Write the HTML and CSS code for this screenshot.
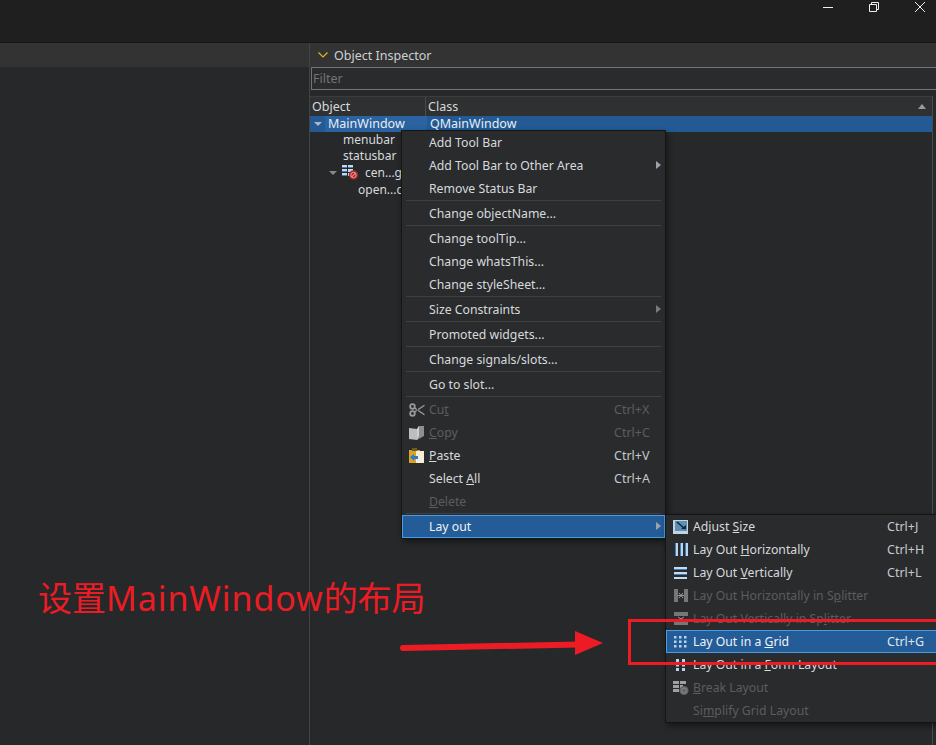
FILE: index.html
```html
<!DOCTYPE html>
<html lang="zh-CN">
<head>
    <meta charset="UTF-8">
    <title>Object Inspector</title>
    <link rel="stylesheet" href="styles.css">
</head>
<body>

<div class="titlebar">
    <svg class="winbtn" width="12" height="12" viewBox="0 0 12 12"><path d="M1 6.5h10" stroke="#eee" fill="none"/></svg>
    <svg class="winbtn" width="12" height="12" viewBox="0 0 12 12"><path d="M1.5 3.5h7v7h-7zM3.5 3V1.5h7v7H9" stroke="#eee" fill="none"/></svg>
    <svg class="winbtn" width="12" height="12" viewBox="0 0 12 12"><path d="M1 1l10 10M11 1L1 11" stroke="#eee" fill="none"/></svg>
</div>

<div class="workspace">
    <div class="leftpane">
        <div class="band"></div>
    </div>
    <div class="inspector">
        <div class="band dock-title">
            <svg width="10" height="6" viewBox="0 0 10 6"><path d="M.5.5L5 5 9.5.5" stroke="#e6b422" stroke-width="1.2" fill="none"/></svg>
            <span>Object Inspector</span>
        </div>
        <div class="filter">Filter</div>
        <div class="tree">
            <div class="tree-main">
                <div class="tree-head">
                    <div class="col-object">Object</div>
                    <div class="col-class">Class<span class="sort"></span></div>
                </div>
                <div class="row row-selected">
                    <span class="twisty"></span><span class="row-name">MainWindow</span><span class="row-class">QMainWindow</span>
                </div>
                <div class="row indent-2">menubar</div>
                <div class="row indent-2">statusbar</div>
                <div class="row row-tall indent-1">
                    <span class="twisty"></span>
                    <svg width="17" height="15" viewBox="0 0 17 15">
                        <path d="M0 0h5v3H0zM6 0h5v3H6zM0 4h5v3H0zM6 4h5v3H6zM0 8h5v3H0zM6 8h2v3H6z" fill="#c9d6e6"/>
                        <path d="M0 2h5v1H0zM6 2h5v1H6zM0 6h5v1H0zM0 10h5v1H0z" fill="#3f7db8"/>
                        <circle cx="11.500" cy="10" r="4.700" fill="#a82828"/>
                        <circle cx="11.500" cy="10" r="2.700" stroke="#e8a0a0" fill="none"/>
                        <path d="M9.500 12l4-4" stroke="#f3c0c0"/>
                    </svg>
                    <span class="row-label">cen...g</span>
                </div>
                <div class="row row-tall indent-3">open...c</div>
            </div>
            <div class="scrollcol"></div>
        </div>
    </div>
</div>

<div class="menu menu-main">
    <div class="item"><span></span><span>Add Tool Bar</span></div>
    <div class="item"><span></span><span>Add Tool Bar to Other Area</span><i class="more"></i></div>
    <div class="item"><span></span><span>Remove Status Bar</span></div>
    <div class="sep"></div>
    <div class="item"><span></span><span>Change objectName...</span></div>
    <div class="sep"></div>
    <div class="item"><span></span><span>Change toolTip...</span></div>
    <div class="item"><span></span><span>Change whatsThis...</span></div>
    <div class="item"><span></span><span>Change styleSheet...</span></div>
    <div class="sep"></div>
    <div class="item"><span></span><span>Size Constraints</span><i class="more more-dim"></i></div>
    <div class="sep"></div>
    <div class="item"><span></span><span>Promoted widgets...</span></div>
    <div class="sep"></div>
    <div class="item"><span></span><span>Change signals/slots...</span></div>
    <div class="sep"></div>
    <div class="item"><span></span><span>Go to slot...</span></div>
    <div class="sep"></div>
    <div class="item off">
        <svg width="16" height="16" viewBox="0 0 16 16"><path d="M15.500 2.500L5 9.500 6 10.500 15.500 4zM15.500 13.500L5 6.500 6 5.500 15.500 12z" fill="#9a9a9a"/><circle cx="3.500" cy="4.500" r="2.300" stroke="#9a9a9a" stroke-width="1.800" fill="none"/><circle cx="3.500" cy="11.500" r="2.300" stroke="#9a9a9a" stroke-width="1.800" fill="none"/></svg>
        <span>Cu<u>t</u></span><b>Ctrl+X</b>
    </div>
    <div class="item off">
        <svg width="16" height="16" viewBox="0 0 16 16"><path d="M0 3l8 1v11l-8-1z" fill="#bdbdbd"/><path d="M8 4l2-3h5v10l-7 4z" fill="#8f8f8f"/><path d="M8 4l2-3v10l-2 4z" fill="#d0d0d0"/></svg>
        <span><u>C</u>opy</span><b>Ctrl+C</b>
    </div>
    <div class="item">
        <svg width="16" height="16" viewBox="0 0 16 16"><path d="M0 2h11v13H0z" fill="#d9a520"/><path d="M3 0h5v3H3z" fill="#6a5a28"/><path d="M7 3h8v12H7z" fill="#f4eed8"/><path d="M1 9l4-3v2h4v3H5v2z" fill="#2f78d0"/></svg>
        <span><u>P</u>aste</span><b>Ctrl+V</b>
    </div>
    <div class="item"><span></span><span>Select <u>A</u>ll</span><b>Ctrl+A</b></div>
    <div class="item off"><span></span><span><u>D</u>elete</span></div>
    <div class="sep"></div>
    <div class="item item-active"><span></span><span>Lay out</span><i class="more"></i></div>
</div>

<div class="menu menu-sub">
    <div class="item">
        <svg width="15" height="14" viewBox="0 0 15 14"><path d="M0 0h15v14H0z" fill="#c7d3dc"/><path d="M2 1h12v10H2z" fill="#5b8fb5"/><path d="M4 2l8 7" stroke="#10273d" stroke-width="1.600"/><path d="M8 9h5V5z" fill="#10273d"/></svg>
        <span>Adjust <u>S</u>ize</span><b>Ctrl+J</b>
    </div>
    <div class="item">
        <svg width="14" height="13" viewBox="0 0 14 13"><path d="M1 0h3v13H1zM6 0h3v13H6zM11 0h3v13h-3z" fill="#b9d4ec"/><path d="M1 0h1v13H1zM6 0h1v13H6zM11 0h1v13h-1z" fill="#3f7db8"/></svg>
        <span>Lay Out <u>H</u>orizontally</span><b>Ctrl+H</b>
    </div>
    <div class="item">
        <svg width="14" height="13" viewBox="0 0 14 13"><path d="M0 1h13v3H0zM0 6h13v3H0zM0 11h13v2H0z" fill="#c5dcf0"/><path d="M0 3h13v1H0zM0 8h13v1H0z" fill="#3f7db8"/></svg>
        <span>Lay Out <u>V</u>ertically</span><b>Ctrl+L</b>
    </div>
    <div class="item off">
        <svg width="14" height="13" viewBox="0 0 14 13"><path d="M0 0h4v13H0zM10 0h4v13h-4z" fill="#777"/><path d="M4 6.500h6M5 4l2 2.500L5 9M9 4L7 6.500 9 9" stroke="#999" fill="none"/></svg>
        <span>Lay Out Horizontally in S<u>p</u>litter</span>
    </div>
    <div class="item off">
        <svg width="14" height="13" viewBox="0 0 14 13"><path d="M0 0h14v4H0zM0 9h14v4H0z" fill="#777"/><path d="M4 5l3 2 3-2M4 8l3-1.500 3 1.500" stroke="#999" fill="none"/></svg>
        <span>Lay Out Vertically in Sp<u>l</u>itter</span>
    </div>
    <div class="item item-active">
        <svg width="13" height="13" viewBox="0 0 13 13"><path d="M0 1h2.500v2.500H0zM5 1h2.500v2.500H5zM10 1h2.500v2.500H10zM0 5.500h2.500V8H0zM5 5.500h2.500V8H5zM10 5.500h2.500V8H10zM0 10h2.500v2.500H0zM5 10h2.500v2.500H5zM10 10h2.500v2.500H10z" fill="#b9d4ec"/></svg>
        <span>Lay Out in a <u>G</u>rid</span><b>Ctrl+G</b>
    </div>
    <div class="item">
        <svg width="13" height="13" viewBox="0 0 13 13"><path d="M2 1h3v3H2zM8 1h3v3H8zM2 5.500h3v3H2zM8 5.500h3v3H8zM2 10h3v3H2zM8 10h3v3H8z" fill="#b9d4ec"/></svg>
        <span>Lay Out in a <u>F</u>orm Layout</span>
    </div>
    <div class="item off">
        <svg width="16" height="15" viewBox="0 0 16 15"><path d="M0 1h6v3H0zM7 1h6v3H7zM0 5h6v3H0zM0 9h6v3H0zM7 5h3v3H7z" fill="#a0a0a0"/><circle cx="11" cy="10.500" r="4.500" fill="#666"/><circle cx="11" cy="10.500" r="2.500" stroke="#888" fill="none"/></svg>
        <span><u>B</u>reak Layout</span>
    </div>
    <div class="item off"><span></span><span>Si<u>m</u>plify Grid Layout</span></div>
</div>

<div class="note">设置<span class="note-latin">MainWindow</span>的布局</div>
<div class="red-box"></div>
<svg class="red-arrow" width="210" height="30" viewBox="0 0 210 30">
    <path d="M4 19L180 15.500" stroke="#ed1c24" stroke-width="6" stroke-linecap="round" fill="none"/>
    <path d="M176 2L204 14 176 26z" fill="#ed1c24"/>
</svg>

</body>
</html>
```

FILE: styles.css
```css
html, body {
    margin: 0;
    height: 100%;
    overflow: hidden;
}
body {
    width: 936px;
    height: 745px;
    position: relative;
    display: flex;
    flex-direction: column;
    background-color: #26282a;
    color: #d6dadd;
    font-family: "Noto Sans", "Liberation Sans", sans-serif;
    font-size: 12.5px;
}
.titlebar {
    height: 43px;
    flex: none;
    box-sizing: border-box;
    background-color: #1f1f1f;
    border-bottom: 1px solid #161616;
    display: flex;
    justify-content: flex-end;
    align-items: flex-start;
    gap: 34px;
    padding: 1px 10px 0 0;
}
.workspace {
    flex: 1;
    display: flex;
    min-height: 0;
}
.leftpane {
    width: 309px;
    flex: none;
    border-right: 1px solid #444;
}
.band {
    height: 24px;
    background-color: #333;
}
.inspector {
    flex: 1;
    display: flex;
    flex-direction: column;
    min-width: 0;
}
.dock-title {
    display: flex;
    align-items: center;
    gap: 6px;
    padding-left: 8px;
    color: #ccd0d4;
    height: 24px;
}
.filter {
    height: 23px;
    box-sizing: border-box;
    border: 1px solid #747474;
    border-right: none;
    margin-left: 1px;
    padding-left: 1px;
    line-height: 21px;
    color: #757575;
    background-color: #2a2b2d;
}
.tree {
    flex: 1;
    display: flex;
    margin-top: 6px;
}
.tree-main {
    flex: 1;
}
.scrollcol {
    width: 3px;
    border-left: 1px solid #4c4c4c;
}
.tree-head {
    height: 20px;
    display: flex;
    background-color: #2f3031;
    border-top: 1px solid #3c3c3c;
    box-sizing: border-box;
    line-height: 19px;
}
.col-object {
    width: 116px;
    padding-left: 2px;
    border-right: 1px solid #4a4a4a;
    box-sizing: border-box;
}
.col-class {
    flex: 1;
    padding-left: 2px;
    display: flex;
    align-items: center;
    justify-content: space-between;
}
.sort {
    width: 0;
    height: 0;
    margin-right: 6px;
    border-left: 4px solid transparent;
    border-right: 4px solid transparent;
    border-bottom: 5px solid #9a9a9a;
}
.row {
    height: 16px;
    line-height: 16px;
    font-size: 12px;
    display: flex;
    align-items: center;
    white-space: nowrap;
}
.row-tall {
    height: 17px;
}
.row-selected {
    background-color: #235a94;
    color: #e6eef6;
    padding-left: 4px;
    font-size: 12.5px;
}
.row-name {
    width: 102px;
    padding-left: 3px;
    box-sizing: border-box;
    flex: none;
    margin-left: 1px;
    background-color: #2a639f;
}
.row-class {
    padding-left: 3px;
}
.twisty {
    width: 0;
    height: 0;
    flex: none;
    border-left: 4px solid transparent;
    border-right: 4px solid transparent;
    border-top: 4px solid #a9b9c9;
    margin-right: 2px;
}
.indent-1 {
    padding-left: 19px;
    gap: 3px;
}
.indent-1 .twisty {
    border-top-color: #888;
}
.row-label {
    margin-left: 3px;
}
.indent-2 {
    padding-left: 33px;
}
.indent-3 {
    padding-left: 48px;
}

/* menus sit over the inspector */
.menu {
    position: absolute;
    box-sizing: border-box;
    background-color: #2a2b2d;
    border: 1px solid #141414;
    box-shadow: 2px 3px 6px rgba(0,0,0,0.45);
    font-size: 12.25px;
}
.menu-main {
    left: 401px;
    top: 130px;
    width: 265px;
}
.menu-sub {
    left: 665px;
    top: 514px;
    width: 280px;
}
.item {
    height: 23px;
    display: grid;
    grid-template-columns: 27px 1fr 51px;
    align-items: center;
    position: relative;
    white-space: nowrap;
}
.menu-sub .item {
    grid-template-columns: 27px 194px 1fr;
}
.item > svg {
    justify-self: center;
    margin-left: 2px;
}
.item b {
    font-weight: normal;
    font-size: 12.5px;
    color: #c4c8cc;
}
.off, .off b {
    color: #5b5d5f;
}
.sep {
    height: 1px;
    margin: 0 4px 1px;
    background-color: #3e3f41;
}
.more {
    position: absolute;
    right: 4px;
    top: 7px;
    border-top: 4px solid transparent;
    border-bottom: 4px solid transparent;
    border-left: 5px solid #9aa3ac;
}
.more-dim {
    border-left-color: #7a7a7a;
}
.item-active {
    height: 23px;
    box-sizing: border-box;
    background-color: #245c97;
    color: #eef3f8;
    box-shadow: inset 0 0 0 1px #4b9ce6;
}
.item-active b {
    color: #dde6ee;
}

/* hand-drawn annotation on top of the screenshot */
.note {
    position: absolute;
    left: 38px;
    top: 574px;
    font-family: "Noto Sans", "Noto Sans CJK SC", sans-serif;
    font-size: 34px;
    line-height: 48px;
    color: #ed1c24;
    white-space: nowrap;
}
.note-latin {
    letter-spacing: 0.9px;
}
.red-box {
    position: absolute;
    left: 628px;
    top: 619px;
    width: 320px;
    height: 46px;
    box-sizing: border-box;
    border: 3px solid #ed1c24;
}
.red-arrow {
    position: absolute;
    left: 399px;
    top: 629px;
}
```
